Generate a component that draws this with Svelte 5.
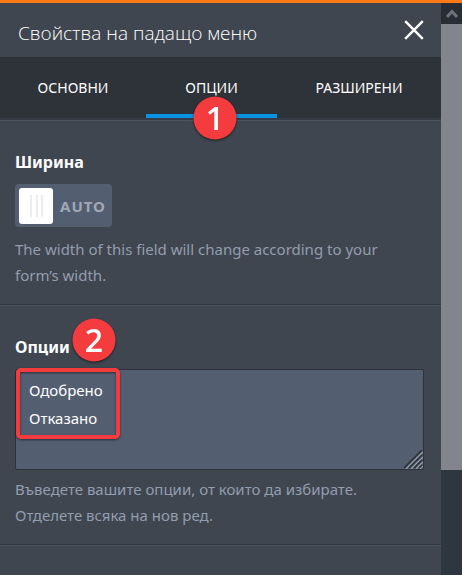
<script lang="ts">
	const tabs = ['ОСНОВНИ', 'ОПЦИИ', 'РАЗШИРЕНИ'];

	let active = $state('ОПЦИИ');
	let fixedWidth = $state(false);
	let options = $state('Одобрено\nОтказано');
</script>

<div class="screen">
	<div class="panel">
		<header class="head">
			<h1>Свойства на падащо меню</h1>
			<button class="close" aria-label="Затвори">
				<svg width="20" height="20" viewBox="0 0 20 20" fill="none" stroke="#fff" stroke-width="2.4">
					<path d="M1.2 1.2L18.8 18.8M18.8 1.2L1.2 18.8" />
				</svg>
			</button>
		</header>

		<nav class="tabs">
			{#each tabs as tab}
				<button class="tab" class:active={tab === active} onclick={() => (active = tab)}>
					{tab}
					{#if tab === 'ОПЦИИ'}
						<span class="marker marker-tab">
							<svg width="44" height="44" viewBox="0 0 44 44"><circle cx="22" cy="22" r="21.5" /></svg>
							<b>1</b>
						</span>
					{/if}
				</button>
			{/each}
		</nav>

		<section class="group">
			<div class="label">Ширина</div>
			<label class="switch">
				<input type="checkbox" bind:checked={fixedWidth} />
				<span>AUTO</span>
			</label>
			<p class="hint">The width of this field will change according to your form’s width.</p>
		</section>

		<section class="group">
			<label class="label" for="options">
				Опции
				<span class="marker marker-label">
					<svg width="44" height="44" viewBox="0 0 44 44"><circle cx="22" cy="22" r="21.5" /></svg>
					<b>2</b>
				</span>
			</label>
			<div class="field">
				<textarea id="options" spellcheck="false" bind:value={options}></textarea>
				<svg class="grip" width="19" height="19" viewBox="0 0 19 19" fill="none">
					<path d="M2 19L19 2M7 19L19 7M12 19L19 12M16 19L19 16" stroke="#99a1ad" stroke-width="1.2" />
					<path d="M0 18L18 0M5 18L18 5M10 18L18 10M15 18L18 15" stroke="#282c34" stroke-width="1.4" />
				</svg>
				<div class="highlight"></div>
			</div>
			<p class="hint hint-field">Въведете вашите опции, от които да избирате.<br />Отделете всяка на нов ред.</p>
		</section>
	</div>

	<div class="scrollbar">
		<div class="arrow">
			<svg width="12" height="9" viewBox="0 0 12 9" fill="none" stroke="#6d7178" stroke-width="3">
				<path d="M1 8L6 2.5L11 8" />
			</svg>
		</div>
		<div class="thumb"></div>
		<div class="track"></div>
	</div>
</div>

<style>
	:global(body) {
		margin: 0;
		background: #3f4650;
	}
	.screen {
		display: flex;
		box-sizing: border-box;
		min-height: 100vh;
		border-top: 3px solid #ff7a14;
		background: #3f4650;
		color: #fff;
		font-family: 'Noto Sans', 'Open Sans', sans-serif;
		overflow: hidden;
	}
	.panel {
		flex: 1;
		min-width: 0;
	}
	button {
		padding: 0;
		border: none;
		background: none;
		color: inherit;
		font: inherit;
		cursor: pointer;
	}
	.head {
		display: flex;
		align-items: center;
		justify-content: space-between;
		height: 54px;
		padding: 0 17px 0 18px;
	}
	h1 {
		margin: 0;
		padding-top: 6px;
		font-family: 'Open Sans', sans-serif;
		font-size: 19px;
		font-weight: 300;
		line-height: 24px;
		white-space: nowrap;
	}
	.close svg {
		display: block;
	}
	.tabs {
		display: grid;
		grid-template-columns: 146fr 131fr 164fr;
		height: 61px;
		background: #2e3239;
		border-bottom: 2px solid #363c45;
		box-shadow: 0 1px #4b5361;
	}
	.tab {
		position: relative;
		padding-top: 4px;
		border-bottom: 4px solid transparent;
		font-size: 14px;
	}
	.tab.active {
		border-bottom-color: #0a93e2;
	}

	.marker {
		position: absolute;
		z-index: 2;
		display: grid;
		place-items: center;
		width: 44px;
		height: 44px;
		filter: drop-shadow(0 1px 1px rgba(0, 0, 0, 0.6));
	}
	.marker svg {
		grid-area: 1 / 1;
		fill: #f43c3e;
	}
	.marker b {
		grid-area: 1 / 1;
		z-index: 1;
		color: #fff;
		font-family: 'Open Sans', sans-serif;
		font-size: 32px;
		font-weight: 600;
		line-height: 44px;
	}
	.marker-tab {
		left: 47px;
		top: 39px;
	}
	.marker-label {
		left: 57px;
		top: -16px;
	}

	.group {
		padding: 29px 17px 16px 15px;
		border-bottom: 1px solid #323840;
		box-shadow: 0 1px #4b5361;
	}
	.label {
		display: block;
		position: relative;
		margin-bottom: 9px;
		font-size: 16px;
		font-weight: 700;
		line-height: 26px;
	}
	.switch {
		display: inline-flex;
		align-items: center;
		gap: 7px;
		box-sizing: border-box;
		height: 43px;
		padding: 0 6px 0 4px;
		border-radius: 4px;
		background: #535e70;
		color: #a1a9b7;
		font-size: 15px;
		font-weight: 700;
		letter-spacing: 1px;
		vertical-align: top;
		cursor: pointer;
	}
	.switch input {
		appearance: none;
		width: 34px;
		height: 36px;
		margin: 0;
		border-radius: 3px;
		background:
			linear-gradient(#ededed, #ededed) 11px 7px / 2px 22px no-repeat,
			linear-gradient(#ededed, #ededed) 17px 7px / 2px 22px no-repeat,
			linear-gradient(#ededed, #ededed) 22px 7px / 2px 22px no-repeat,
			#fff;
		cursor: pointer;
	}
	.hint {
		margin: 9px 0 0;
		padding-right: 20px;
		color: #939dae;
		font-size: 15px;
		line-height: 26px;
	}
	.hint-field {
		margin-top: 6px;
	}
	.field {
		position: relative;
	}
	textarea {
		display: block;
		box-sizing: border-box;
		width: 100%;
		height: 101px;
		padding: 6px 13px;
		border: 1px solid #2e3239;
		border-radius: 2px;
		outline: none;
		background: #535e70;
		color: #fff;
		font-family: inherit;
		font-size: 15px;
		line-height: 28px;
		resize: none;
	}
	.grip {
		position: absolute;
		right: 1px;
		bottom: 1px;
	}
	.highlight {
		position: absolute;
		left: 1px;
		top: -1px;
		box-sizing: border-box;
		width: 104px;
		height: 71px;
		border: 4px solid #f43c3e;
		border-radius: 5px;
		filter: drop-shadow(0 1px 1px rgba(0, 0, 0, 0.5));
		pointer-events: none;
	}

	.scrollbar {
		display: flex;
		flex-direction: column;
		width: 21px;
		background: #2e3640;
	}
	.arrow {
		display: grid;
		place-items: center;
		height: 21px;
		background: #282c35;
	}
	.thumb {
		flex: 446;
		background: #82858d;
	}
	.track {
		flex: 105;
	}
</style>
